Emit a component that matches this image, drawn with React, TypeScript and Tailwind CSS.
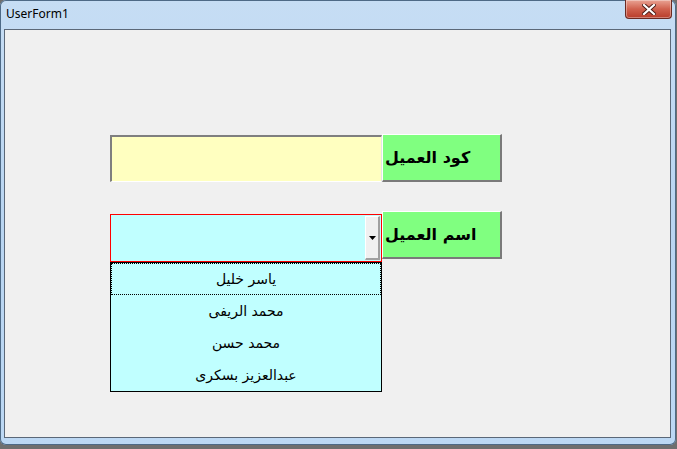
const arabic = "font-['DejaVu_Sans',sans-serif]";

const customers = ["ياسر خليل", "محمد الريفى", "محمد حسن", "عبدالعزيز بسكرى"];

function CloseButton() {
  return (
    <div className="mt-0 mr-[4px] flex h-[19px] w-[47px] items-center justify-center rounded-b-[4px] border border-t-0 border-[#6b2a22] bg-gradient-to-b from-[#e9a394] via-[#d0614e] to-[#b83c2a] shadow-[inset_0_0_0_1px_rgba(255,255,255,0.35)]">
      <svg width="14" height="11" viewBox="0 0 14 11">
        <path
          d="M2 1 L12 10 M12 1 L2 10"
          stroke="#4a1a14"
          strokeWidth="4"
          strokeLinecap="square"
        />
        <path
          d="M2 1 L12 10 M12 1 L2 10"
          stroke="#ffffff"
          strokeWidth="2.2"
          strokeLinecap="square"
        />
      </svg>
    </div>
  );
}

function GreenLabel({ text, className }: { text: string; className?: string }) {
  return (
    <div
      dir="rtl"
      className={`flex h-[48px] w-[120px] items-center justify-end border-t border-l border-b-2 border-r-2 border-t-white border-l-white border-b-[#7a7a7a] border-r-[#7a7a7a] bg-[#80ff80] pl-[2px] text-[16px] font-bold text-black ${arabic} ${className ?? ""}`}
    >
      <span className="leading-none">{text}</span>
    </div>
  );
}

export default function App() {
  return (
    <div className="h-[449px] w-[677px] overflow-hidden bg-[#6f6f6f] font-['Noto_Sans',sans-serif]">
      <div className="flex h-[445px] w-[676px] flex-col rounded-[6px] bg-gradient-to-b from-[#c6ddf4] via-[#b9d5f1] to-[#bcd8f4] shadow-[inset_0_0_0_1px_#4e6a86]">
        <div className="flex h-[29px] shrink-0 items-start justify-between">
          <span className="pl-[6px] pt-[6px] text-[12px] leading-[16px] text-black">
            UserForm1
          </span>
          <CloseButton />
        </div>
        <div className="mx-[4px] h-[409px] w-[667px] border border-[#5b6878] bg-[#f0f0f0] pl-[105px] pt-[104px]">
          <div className="flex items-start">
            <div className="mt-[1px] h-[47px] w-[272px] border-t-2 border-l-2 border-b border-r border-t-[#7f7f7f] border-l-[#7f7f7f] border-b-white border-r-[#e6e6e6] bg-[#ffffc0]" />
            <GreenLabel text="كود العميل" />
          </div>
          <div className="mt-[29px] flex items-start">
            <div className="relative mt-[3px] w-[272px]">
              <div className="flex h-[48px] justify-end border border-[#ff0000] bg-[#c0ffff] p-px">
                <div className="flex w-[15px] items-center justify-center border-t border-l border-b-2 border-r-2 border-t-white border-l-white border-b-[#a0a0a0] border-r-[#a0a0a0] bg-[#f0f0f0]">
                  <svg width="7" height="4" viewBox="0 0 7 4">
                    <path d="M0 0 H7 L3.5 4 Z" fill="#000" />
                  </svg>
                </div>
              </div>
              <div className="absolute left-0 top-[48px] w-[272px] border border-black bg-[#c0ffff]">
                {customers.map((name, i) => (
                  <div
                    key={name}
                    dir="rtl"
                    className={`flex h-[32px] items-center justify-center text-[14px] text-black ${arabic} ${
                      i === 0 ? "border border-dotted border-black" : ""
                    }`}
                  >
                    {name}
                  </div>
                ))}
              </div>
            </div>
            <GreenLabel text="اسم العميل" />
          </div>
        </div>
      </div>
    </div>
  );
}
